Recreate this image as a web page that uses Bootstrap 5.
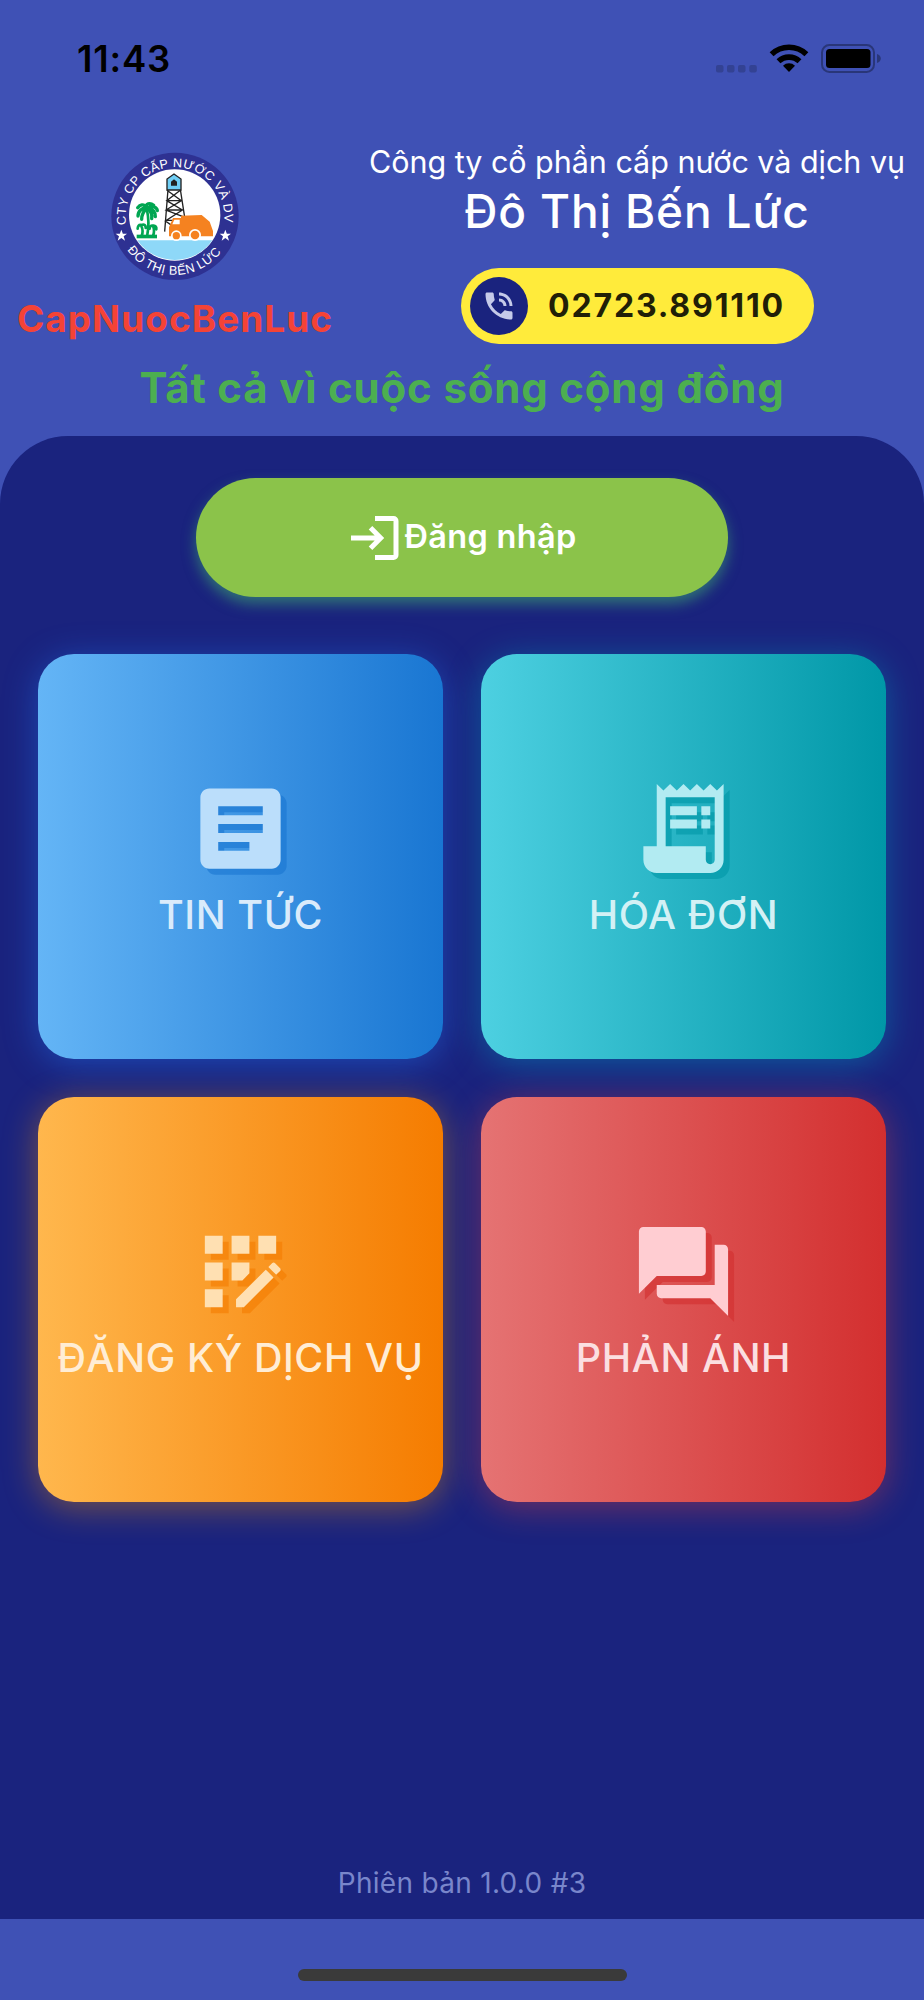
<!DOCTYPE html>
<html lang="vi">
<head>
  <meta charset="utf-8">
  <meta name="viewport" content="width=device-width, initial-scale=1">
  <title>CapNuocBenLuc</title>
  <link href="https://cdn.jsdelivr.net/npm/bootstrap@5.3.3/dist/css/bootstrap.min.css" rel="stylesheet">
  <style>
    body {
      background-color: #3f51b5;
      font-family: Inter, "Noto Sans", sans-serif;
    }
    .phone { width: 924px; height: 2000px; }
    .phone svg { display: block; flex: none; }

    /* Status bar */
    .status-bar { height: 92px; padding: 0 43px 0 77px; }
    .clock { font-size: 36.5px; font-weight: 600; line-height: 44px; padding-top: 37px; letter-spacing: .8px; }

    /* Header */
    .brand { width: 350px; padding-top: 60px; }
    .brand-name { color: #f44336; font-size: 37px; font-weight: 700; line-height: 44px; margin-top: 16px; letter-spacing: 1px; }
    .company { padding-top: 48px; }
    .company-line { font-size: 30.5px; line-height: 44px; letter-spacing: -.03px; }
    .company-city { font-size: 46px; font-weight: 500; line-height: 55px; letter-spacing: .85px; }
    .hotline { width: 353px; height: 76px; margin-top: 29px; padding-left: 9px; background-color: #ffeb3b; }
    .hotline-icon { width: 58px; height: 58px; background-color: #1a237e; }
    .hotline-number { color: #211f07; font-size: 32px; font-weight: 700; margin-left: 20.5px; letter-spacing: 1.85px; }
    .slogan { color: #4caf50; font-size: 42px; font-weight: 700; line-height: 56px; margin-top: 16px; letter-spacing: .8px; }

    /* Dark panel */
    .panel { height: 1483px; margin-top: 20px; padding: 42px 38px 0; background-color: #1a237e; border-radius: 68px 68px 0 0; }
    .login-btn, .login-btn:hover {
      width: 532px; height: 119px; gap: 6px; padding: 0 0 0 3px; color: #fff; background-color: #8bc34a;
      font-size: 32.5px; font-weight: 600; letter-spacing: .3px; border: 0; box-shadow: 0 7px 14px rgba(58, 155, 114, .65);
    }
    .tiles { display: grid; grid-template-columns: 405px 405px; gap: 38px; margin-top: 57px; }
    .tile { height: 405px; padding-top: 120.5px; border-radius: 36px; text-decoration: none; }
    .tile svg { overflow: visible; }
    .tile-label { font-size: 39.5px; font-weight: 500; line-height: 48px; margin-top: 9.5px; letter-spacing: .6px; white-space: nowrap; }
    .tile-blue { background: linear-gradient(90deg, #64b5f6, #1976d2); box-shadow: 0 5px 34px rgba(33, 120, 243, .45); color: #bbdefb; }
    .tile-teal { background: linear-gradient(90deg, #4dd0e1, #0097a7); box-shadow: 0 5px 34px rgba(0, 150, 190, .48); color: #b2ebf2; }
    .tile-orange { background: linear-gradient(90deg, #ffb74d, #f57c00); box-shadow: 0 5px 34px rgba(255, 152, 0, .42); color: #ffe0b2; }
    .tile-red { background: linear-gradient(90deg, #e57373, #d32f2f); box-shadow: 0 5px 34px rgba(244, 67, 54, .4); color: #ffcdd2; }
    .tile-blue .tile-label { color: #daebfb; }
    .tile-teal .tile-label { color: #d3f1f5; }
    .tile-orange .tile-label { color: #ffedd5; }
    .tile-red .tile-label { color: #fbdfe1; }
    .icon-shadow { opacity: .6; }
    .tile-blue .icon-shadow { fill: #1976d2; }
    .tile-teal .icon-shadow { fill: #0097a7; }
    .tile-orange .icon-shadow { fill: #f57c00; }
    .tile-red .icon-shadow { fill: #d32f2f; }
    .version { color: #7986cb; font-size: 28px; line-height: 36px; padding-bottom: 18px; letter-spacing: .3px; }

    .home-bar { width: 329px; height: 12px; margin-top: 50px; background-color: #3a3a3a; }
  </style>
</head>
<body>
  <!-- Icon shapes, each used twice per tile (shadow + face) -->
  <svg class="d-none">
    <symbol id="article" viewBox="0 0 24 24"><path d="M19 3H5c-1.1 0-2 .9-2 2v14c0 1.1.9 2 2 2h14c1.1 0 2-.9 2-2V5c0-1.1-.9-2-2-2zm-5 14H7v-2h7v2zm3-4H7v-2h10v2zm0-4H7V7h10v2z"/></symbol>
    <symbol id="receipt" viewBox="0 0 24 24"><path d="M19.5 3.5 18 2l-1.500 1.500L15 2l-1.500 1.500L12 2l-1.500 1.500L9 2 7.500 3.500 6 2v14H3v3c0 1.660 1.340 3 3 3h12c1.660 0 3-1.340 3-3V2l-1.500 1.500zM19 19c0 .55-.45 1-1 1s-1-.45-1-1v-3H8V5h11v14zM9 7h6v2H9zM16 7h2v2h-2zM9 10h6v2H9zM16 10h2v2h-2z"/></symbol>
    <symbol id="register" viewBox="0 0 24 24"><path d="M10 4h4v4h-4zM4 16h4v4H4zM4 10h4v4H4zM4 4h4v4H4zM14 12.420V10h-4v4h2.420zM20.880 11.290l-1.170-1.170c-.16-.16-.42-.16-.58 0l-.88.88L20 12.750l.88-.88c.16-.16.16-.42 0-.58zM11 18.250V20h1.750l6.670-6.670-1.750-1.750zM16 4h4v4h-4z"/></symbol>
    <symbol id="forum" viewBox="0 0 24 24"><path d="M21 6h-2v9H6v2c0 .55.45 1 1 1h11l4 4V7c0-.55-.45-1-1-1zm-4 6V3c0-.55-.45-1-1-1H3c-.55 0-1 .45-1 1v14l4-4h10c.55 0 1-.45 1-1z"/></symbol>
  </svg>

  <div class="phone d-flex flex-column">
    <div class="status-bar d-flex justify-content-between align-items-start">
      <div class="clock text-black">11:43</div>
      <svg width="166" height="76" viewBox="715 0 166 76">
        <g fill="#334293">
          <rect x="716" y="65" width="7.500" height="7.500" rx="2"/>
          <rect x="727" y="65" width="7.500" height="7.500" rx="2"/>
          <rect x="738" y="65" width="7.500" height="7.500" rx="2"/>
          <rect x="749.300" y="65" width="7.500" height="7.500" rx="2"/>
        </g>
        <path d="M789 72l-6-6.200a8.600 8.600 0 0 1 12 0z"/>
        <path d="M778.500 61.300a15.300 15.300 0 0 1 21 0M771.600 54.200a25.200 25.200 0 0 1 34.800 0" fill="none" stroke="#000" stroke-width="5.600"/>
        <rect x="822" y="45" width="52" height="27" rx="7.500" fill="none" stroke="#293679" stroke-width="2"/>
        <rect x="826" y="49" width="44.500" height="19" rx="3.500"/>
        <path d="M877 54c5 1.500 5 7.500 0 9z" fill="#293679"/>
      </svg>
    </div>

    <!-- Header -->
    <div class="d-flex">
      <div class="brand d-flex flex-column align-items-center">
        <svg width="128" height="129" viewBox="62 38 384 387">
          <defs>
            <path id="arcTop" d="M108 256A148 148 0 1 1 400 256"/>
            <path id="arcBottom" d="M109 329A175 175 0 0 0 396 334"/>
          </defs>
          <circle cx="254" cy="231" r="191" fill="#2e3192"/>
          <circle cx="253" cy="227" r="137" fill="#fff"/>
          <path d="M141 303H366A137 137 0 0 1 141 303z" fill="#8ed8f8"/>
          <!-- water tower -->
          <g fill="none" stroke="#222" stroke-width="4">
            <path d="M233 150L223 277M270 150L284 240M230 153L273 184 227 212 278 232M270 153L229 184 276 212 225 245 250 262M229 184H273M227 212H277M226 243H262"/>
          </g>
          <path d="M230 152V119L251 104l21 15v33z" fill="#6fcff6" stroke="#222" stroke-width="4"/>
          <path d="M242 139v-12l9-7 9 7v12z" fill="#222"/>
          <!-- palms -->
          <g fill="none" stroke="#00a651" stroke-width="10" stroke-linecap="round">
            <path d="M170 207C160 190 148 197 142 205M170 207C155 203 143 216 143 230M170 207C162 192 180 190 190 198M170 207C188 196 200 205 201 214M172 208C188 208 196 220 195 232M170 207C160 215 154 224 154 240M173 209C183 218 186 228 184 238"/>
            <path d="M170 212Q178 250 171 286M153 260Q160 275 154 290M153 257C145 255 142 262 142 268M153 257C162 253 167 259 166 266M188 259Q194 275 188 290M188 259C180 258 178 264 178 268M188 259C196 258 199 264 198 270" stroke-width="8"/>
          </g>
          <path d="M139 286H200V297H139z" fill="#00a651"/>
          <!-- truck -->
          <path d="M236 292V264l12-28h24v-7l62-2 24 20 10 28v16H236z" fill="#f58220"/>
          <path d="M252 241h16v14h-22z" fill="#fff"/>
          <circle cx="258" cy="289" r="16" fill="#fff"/><circle cx="258" cy="289" r="11" fill="#f58220"/>
          <circle cx="314" cy="287" r="18" fill="#fff"/><circle cx="314" cy="287" r="13" fill="#f58220"/>
          <g fill="#fff" font-family="'Liberation Sans', Arial, sans-serif" font-size="38">
            <text textLength="506"><textPath href="#arcTop" textLength="506">CTY CP CẤP NƯỚC VÀ DV</textPath></text>
            <text textLength="328"><textPath href="#arcBottom" startOffset="3" textLength="328">ĐÔ THỊ BẾN LỨC</textPath></text>
          </g>
          <path id="star" d="M93 271l4.500 12H110l-10 8 4 13-11-8-11 8 4-13-10-8h12.500z" fill="#fff"/>
          <use href="#star" x="312"/>
        </svg>
        <div class="brand-name">CapNuocBenLuc</div>
      </div>
      <div class="company flex-grow-1 d-flex flex-column align-items-center text-white">
        <div class="company-line text-nowrap">Công ty cổ phần cấp nước và dịch vụ</div>
        <div class="company-city">Đô Thị Bến Lức</div>
        <div class="hotline rounded-pill d-flex align-items-center">
          <div class="hotline-icon rounded-circle d-flex align-items-center justify-content-center">
            <svg width="36" height="36" viewBox="0 0 24 24" fill="#c5cae9"><path d="M19 12h2c0-4.970-4.030-9-9-9v2c3.870 0 7 3.130 7 7zm-4 0h2c0-2.760-2.240-5-5-5v2c1.660 0 3 1.340 3 3zm5 3.500c-1.250 0-2.450-.2-3.570-.57-.35-.11-.74-.03-1.020.24l-2.200 2.200c-2.830-1.440-5.150-3.750-6.590-6.590l2.200-2.210c.28-.26.36-.65.25-1C8.700 6.450 8.500 5.250 8.500 4c0-.55-.45-1-1-1H4c-.55 0-1 .45-1 1 0 9.390 7.610 17 17 17 .55 0 1-.45 1-1v-3.500c0-.55-.45-1-1-1z"/></svg>
          </div>
          <div class="hotline-number">02723.891110</div>
        </div>
      </div>
    </div>
    <div class="slogan text-center">Tất cả vì cuộc sống cộng đồng</div>

    <!-- Main panel -->
    <div class="panel d-flex flex-column align-items-center">
      <button type="button" class="login-btn btn rounded-pill d-flex align-items-center justify-content-center">
        <svg width="48" height="44" viewBox="0 0 48 44" fill="none" stroke="#fff" stroke-width="5">
          <path d="M24 2.500H42.500a2.500 2.500 0 0 1 2.500 2.500V39a2.500 2.500 0 0 1-2.500 2.500H24M0 22H29M19.500 11.800L29.700 22 19.500 32.200"/>
        </svg>
        <span>Đăng nhập</span>
      </button>

      <div class="tiles">
        <a href="#" class="tile tile-blue d-flex flex-column align-items-center">
          <svg width="107" height="107" viewBox="0 0 107 107" fill="currentColor"><use class="icon-shadow" href="#article" x="6" y="6" width="107" height="107"/><use href="#article" width="107" height="107"/></svg>
          <div class="tile-label">TIN TỨC</div>
        </a>
        <a href="#" class="tile tile-teal d-flex flex-column align-items-center">
          <svg width="107" height="107" viewBox="0 0 107 107" fill="currentColor"><use class="icon-shadow" href="#receipt" x="6" y="6" width="107" height="107"/><use href="#receipt" width="107" height="107"/></svg>
          <div class="tile-label">HÓA ĐƠN</div>
        </a>
        <a href="#" class="tile tile-orange d-flex flex-column align-items-center">
          <svg width="107" height="107" viewBox="0 0 107 107" fill="currentColor"><use class="icon-shadow" href="#register" x="6" y="6" width="107" height="107"/><use href="#register" width="107" height="107"/></svg>
          <div class="tile-label">ĐĂNG KÝ DỊCH VỤ</div>
        </a>
        <a href="#" class="tile tile-red d-flex flex-column align-items-center">
          <svg width="107" height="107" viewBox="0 0 107 107" fill="currentColor"><use class="icon-shadow" href="#forum" x="6" y="6" width="107" height="107"/><use href="#forum" width="107" height="107"/></svg>
          <div class="tile-label">PHẢN ÁNH</div>
        </a>
      </div>

      <div class="version mt-auto">Phiên bản 1.0.0 #3</div>
    </div>

    <div class="home-bar rounded-pill align-self-center"></div>
  </div>
  <script src="https://cdn.jsdelivr.net/npm/bootstrap@5.3.3/dist/js/bootstrap.bundle.min.js"></script>
</body>
</html>
